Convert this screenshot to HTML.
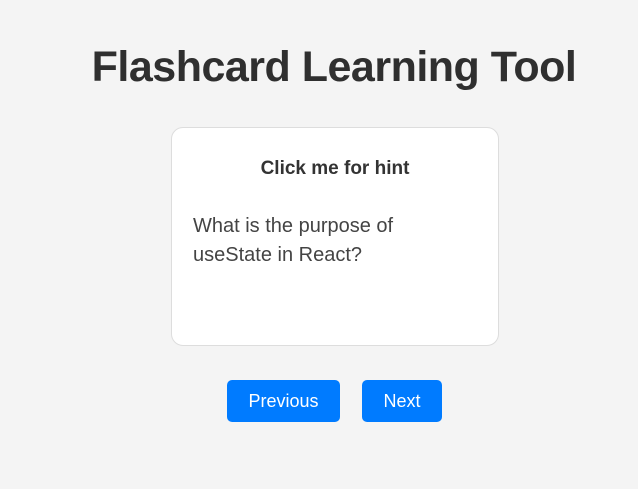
<!DOCTYPE html>
<html><head><style>
html,body{margin:0;padding:0;background:#f4f4f4;width:638px;height:489px;overflow:hidden;font-family:"Liberation Sans",sans-serif;color:#333}
h1{position:absolute;left:0;width:668px;top:38px;margin:0;text-align:center;font-size:43px;letter-spacing:-0.5px;font-weight:bold;color:#2f2f2f;line-height:58px}
.card{position:absolute;left:171px;top:127px;width:326px;height:217px;background:#fff;border:1px solid #ddd;border-radius:12px}
.hint{position:absolute;left:0;width:326px;top:30px;text-align:center;font-weight:bold;font-size:19px;color:#333}
.q{position:absolute;left:21px;top:84px;font-size:20px;line-height:29px;color:#444;width:260px}
.btn{position:absolute;top:380px;height:42px;background:#007bff;color:#fff;border-radius:5px;font-size:18px;line-height:42px;text-align:center}
</style></head><body>
<h1>Flashcard Learning Tool</h1>
<div class="card">
<div class="hint">Click me for hint</div>
<div class="q">What is the purpose of useState in React?</div>
</div>
<div class="btn" style="left:227px;width:113px">Previous</div>
<div class="btn" style="left:362px;width:80px">Next</div>
</body></html>
